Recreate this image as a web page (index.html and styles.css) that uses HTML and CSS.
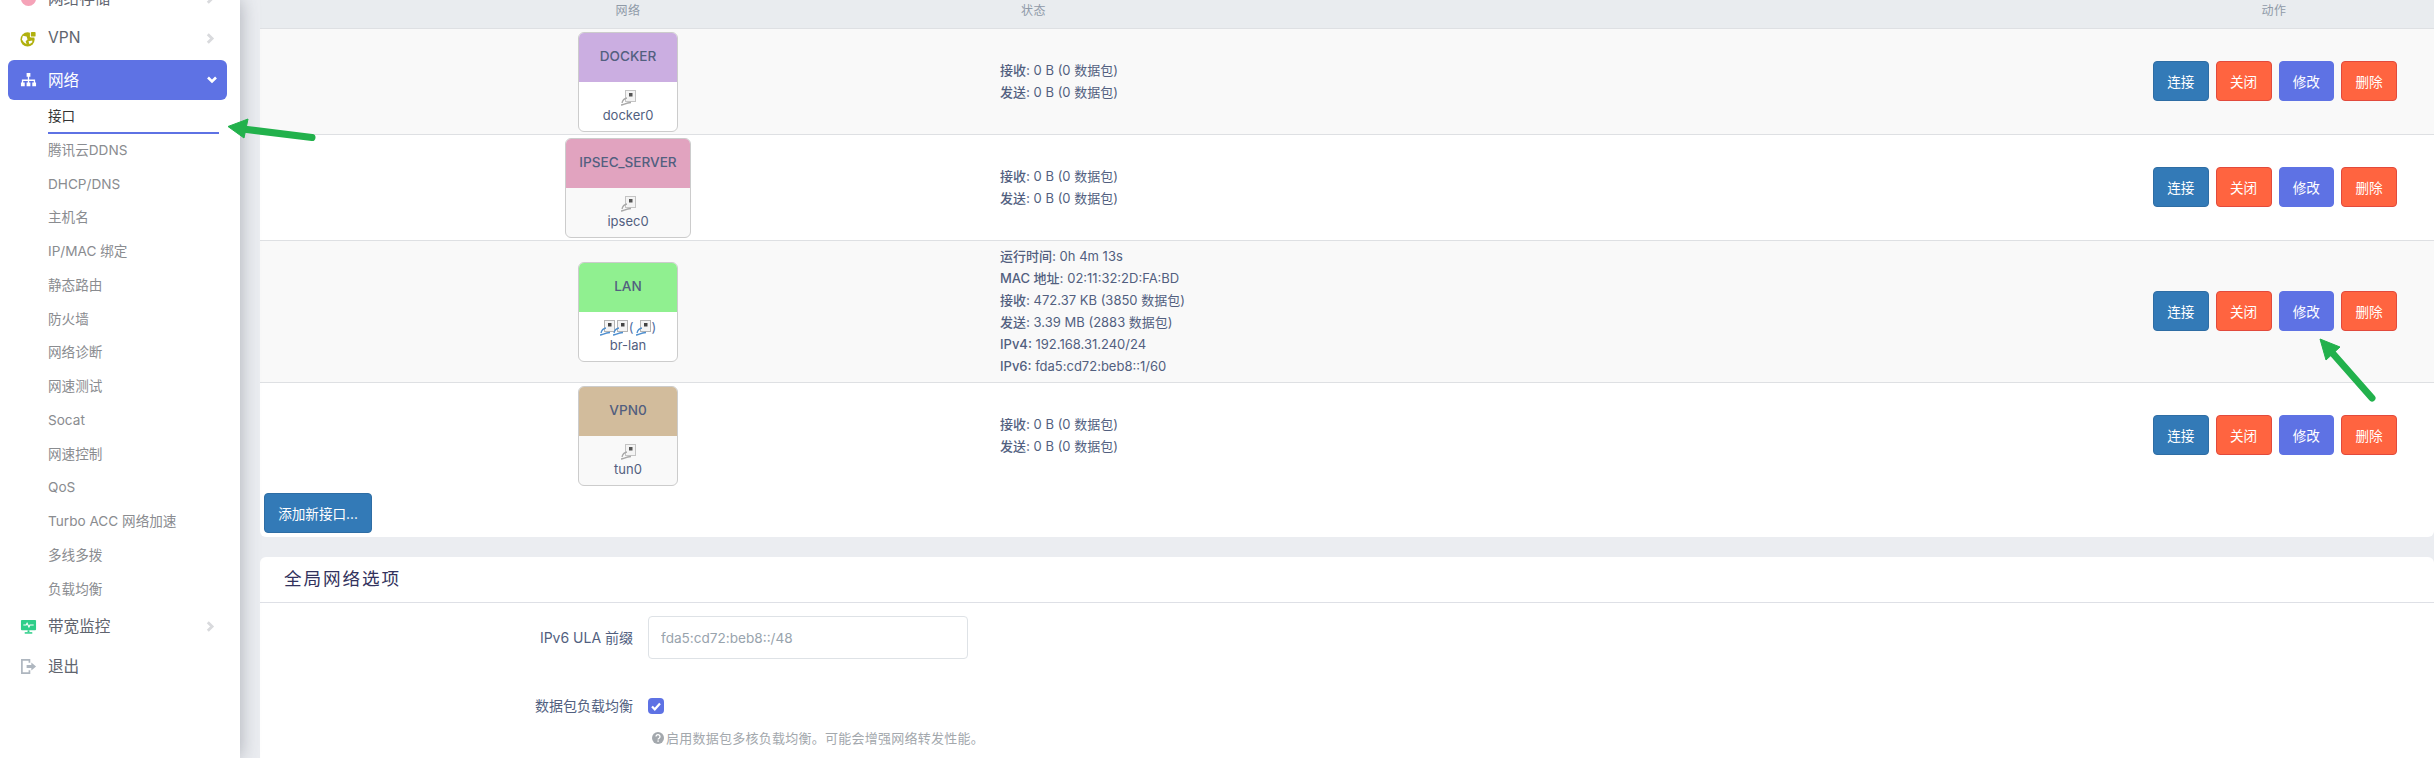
FILE: index.html
```html
<!DOCTYPE html>
<html lang="zh">
<head>
<meta charset="utf-8">
<title>接口</title>
<link rel="stylesheet" href="styles.css">
</head>
<body>
<aside class="sidebar">
  <nav class="nav">
    <a class="nav-item"><svg class="nav-icon" viewBox="0 0 18 18"><circle cx="9" cy="9" r="8" fill="#f5a3b8"/></svg><span>网络存储</span><svg class="chev" viewBox="0 0 10 12"><path d="M2.5 2l4 4-4 4" /></svg></a>
    <a class="nav-item"><svg class="nav-icon" viewBox="0 0 18 18"><circle cx="8" cy="10" r="7.5" fill="#b1b10e"/><path d="M3 6l4 1 1 3-2 2 1 3-3-2-2-3zM9 12l4-1 0 2-3 2z" fill="#fff"/><rect x="10.5" y="1" width="7" height="7" rx="1.5" fill="#fff"/><rect x="11.5" y="2" width="5" height="5" rx="1" fill="#b1b10e"/></svg><span>VPN</span><svg class="chev" viewBox="0 0 10 12"><path d="M2.5 2l4 4-4 4" /></svg></a>
    <a class="nav-item is-open"><svg class="nav-icon" viewBox="0 0 18 18"><path d="M7 1h4v4H7zM8.3 5h1.4v3H16v3h-1.4V9.4H9.7V11H8.3V9.4H3.4V11H2V8h6.3zM1 11h4v4H1zM7 11h4v4H7zM13 11h4v4h-4z" fill="#fff"/></svg><span>网络</span><svg class="chev chev-down" viewBox="0 0 12 10"><path d="M2 2.5l4 4 4-4" /></svg></a>
    <ul class="subnav">
      <li class="is-active">接口</li>
      <li>腾讯云DDNS</li>
      <li>DHCP/DNS</li>
      <li>主机名</li>
      <li>IP/MAC 绑定</li>
      <li>静态路由</li>
      <li>防火墙</li>
      <li>网络诊断</li>
      <li>网速测试</li>
      <li>Socat</li>
      <li>网速控制</li>
      <li>QoS</li>
      <li>Turbo ACC 网络加速</li>
      <li>多线多拨</li>
      <li>负载均衡</li>
    </ul>
    <a class="nav-item nav-after"><svg class="nav-icon" viewBox="0 0 18 18"><rect x="1" y="2" width="16" height="11" rx="1" fill="#2dce89"/><rect x="5" y="15" width="8" height="1.6" fill="#2dce89"/><rect x="8" y="13" width="2" height="2" fill="#2dce89"/><path d="M3.5 7.5h3l1-2 2 4 1-2h4" fill="none" stroke="#fff" stroke-width="1.1"/></svg><span>带宽监控</span><svg class="chev" viewBox="0 0 10 12"><path d="M2.5 2l4 4-4 4" /></svg></a>
    <a class="nav-item"><svg class="nav-icon" viewBox="0 0 18 18"><path d="M10 5V2H2v14h8v-3" fill="none" stroke="#aeb6bf" stroke-width="1.8"/><path d="M7 7.5h5V4.8L17 9l-5 4.2v-2.7H7z" fill="#aeb6bf"/></svg><span>退出</span></a>
  </nav>
</aside>

<main class="main">
  <section class="card card-table">
    <div class="row row-head">
      <div class="head-net">网络</div>
      <div class="head-status">状态</div>
      <div class="head-action">动作</div>
    </div>

    <div class="row row-odd">
      <div class="cell-net">
        <div class="iface">
          <div class="iface-name tint-docker">DOCKER</div>
          <div class="iface-body"><svg class="port" viewBox="0 0 16 16"><use href="#port-grey"/></svg><span>docker0</span></div>
        </div>
      </div>
      <div class="cell-status"><div><b>接收:</b> 0 B (0 数据包)</div><div><b>发送:</b> 0 B (0 数据包)</div></div>
      <div class="cell-action"><button class="btn btn-blue">连接</button><button class="btn btn-red">关闭</button><button class="btn btn-indigo">修改</button><button class="btn btn-red">删除</button></div>
    </div>

    <div class="row row-even">
      <div class="cell-net">
        <div class="iface iface-wide">
          <div class="iface-name tint-ipsec">IPSEC_SERVER</div>
          <div class="iface-body"><svg class="port" viewBox="0 0 16 16"><use href="#port-grey"/></svg><span>ipsec0</span></div>
        </div>
      </div>
      <div class="cell-status"><div><b>接收:</b> 0 B (0 数据包)</div><div><b>发送:</b> 0 B (0 数据包)</div></div>
      <div class="cell-action"><button class="btn btn-blue">连接</button><button class="btn btn-red">关闭</button><button class="btn btn-indigo">修改</button><button class="btn btn-red">删除</button></div>
    </div>

    <div class="row row-odd">
      <div class="cell-net">
        <div class="iface">
          <div class="iface-name tint-lan">LAN</div>
          <div class="iface-body"><div class="ports"><svg class="port" viewBox="0 0 16 16"><use href="#port-blue"/></svg><svg class="port port-tight" viewBox="0 0 16 16"><use href="#port-blue"/></svg><span class="paren">(</span><svg class="port" viewBox="0 0 16 16"><use href="#port-blue"/></svg><span class="paren">)</span></div><span>br-lan</span></div>
        </div>
      </div>
      <div class="cell-status"><div><b>运行时间:</b> 0h 4m 13s</div><div><b>MAC 地址:</b> 02:11:32:2D:FA:BD</div><div><b>接收:</b> 472.37 KB (3850 数据包)</div><div><b>发送:</b> 3.39 MB (2883 数据包)</div><div><b>IPv4:</b> 192.168.31.240/24</div><div><b>IPv6:</b> fda5:cd72:beb8::1/60</div></div>
      <div class="cell-action"><button class="btn btn-blue">连接</button><button class="btn btn-red">关闭</button><button class="btn btn-indigo">修改</button><button class="btn btn-red">删除</button></div>
    </div>

    <div class="row row-even row-last">
      <div class="cell-net">
        <div class="iface">
          <div class="iface-name tint-vpn">VPN0</div>
          <div class="iface-body"><svg class="port" viewBox="0 0 16 16"><use href="#port-grey"/></svg><span>tun0</span></div>
        </div>
      </div>
      <div class="cell-status"><div><b>接收:</b> 0 B (0 数据包)</div><div><b>发送:</b> 0 B (0 数据包)</div></div>
      <div class="cell-action"><button class="btn btn-blue">连接</button><button class="btn btn-red">关闭</button><button class="btn btn-indigo">修改</button><button class="btn btn-red">删除</button></div>
    </div>

    <div class="add-bar"><button class="btn btn-blue btn-add">添加新接口...</button></div>
  </section>

  <section class="card card-form">
    <h3 class="card-title">全局网络选项</h3>
    <div class="form-row form-row-input">
      <label class="form-label">IPv6 ULA 前缀</label>
      <input class="form-input" type="text" placeholder="fda5:cd72:beb8::/48">
    </div>
    <div class="form-row form-row-check">
      <label class="form-label">数据包负载均衡</label>
      <span class="check"><svg viewBox="0 0 16 16"><path d="M4 8.500l2.800 2.800L12 5.500" fill="none" stroke="#fff" stroke-width="2.2"/></svg></span>
    </div>
    <div class="form-row form-row-help">
      <span></span>
      <p class="help"><svg class="help-icon" viewBox="0 0 12 12"><circle cx="6" cy="6" r="6" fill="#a3a8ad"/><path d="M4 4.600a2 2 0 1 1 3.100 1.700c-.7.4-1 .7-1 1.300" fill="none" stroke="#fff" stroke-width="1.3"/><rect x="5.400" y="8.400" width="1.400" height="1.400" fill="#fff"/></svg>启用数据包多核负载均衡。可能会增强网络转发性能。</p>
    </div>
  </section>
</main>

<svg class="annotations" viewBox="0 0 2434 758">
  <g fill="#22b14c" stroke="#22b14c">
    <path d="M243 129L312 137.500" stroke-width="7" stroke-linecap="round" fill="none"/>
    <path d="M228 126.500L248 119L244 138Z" stroke-width="1"/>
    <path d="M2372 398L2328 348" stroke-width="7" stroke-linecap="round" fill="none"/>
    <path d="M2320 339L2340 347L2326 360Z" stroke-width="1"/>
  </g>
</svg>

<svg class="defs" width="0" height="0">
  <defs>
    <g id="port-grey">
      <rect x="5.500" y="0.500" width="10" height="11" fill="#f4f4f4" stroke="#c4c4c4"/>
      <rect x="9" y="3" width="3.500" height="3.500" fill="#555"/>
      <path d="M1 15c3 0 4-2 10-2.500M7 8C4 8.500 2.500 10.500 2 13" fill="none" stroke="#a8a8a8" stroke-width="1.300"/>
    </g>
    <g id="port-blue">
      <rect x="5.500" y="0.500" width="10" height="11" fill="#f4f4f4" stroke="#b4b4b4"/>
      <rect x="9" y="3" width="3.500" height="3.500" fill="#444"/>
      <path d="M1 15c3 0 4-2 10-2.500M7 8C4 8.500 2.500 10.500 2 13" fill="none" stroke="#4f8fcf" stroke-width="1.300"/>
    </g>
  </defs>
</svg>
</body>
</html>
```
FILE: styles.css
```css
* { box-sizing: border-box; }

html, body {
  margin: 0;
  height: 758px;
  overflow: hidden;
}

body {
  display: flex;
  background: #ebedf1;
  font-family: Inter, "Noto Sans CJK SC", sans-serif;
  font-size: 13.6px;
  color: #525f7f;
  text-spacing-trim: space-all;
}

.sidebar {
  flex: 0 0 240px;
  height: 758px;
  background: #fff;
  box-shadow: 0 0 18px rgba(60, 65, 80, 0.38);
  position: relative;
  z-index: 2;
  overflow: hidden;
}

.nav {
  margin-top: -22px;
  display: flex;
  flex-direction: column;
}

.nav-item {
  display: flex;
  align-items: center;
  height: 40px;
  margin: 0 13px 0 8px;
  padding: 0 11px 0 12px;
  border-radius: 6px;
  font-size: 15.6px;
  color: #60646e;
}

.nav-item span { flex: 1; margin-left: 11px; padding-bottom: 2px; }

.nav-icon { width: 17px; height: 17px; flex: none; }

.chev {
  width: 11px;
  height: 13px;
  fill: none;
  stroke: #d9dadd;
  stroke-width: 2.6;
}

.chev-down { stroke: #fff; width: 12px; height: 10px; margin-right: -2px; }

.is-open {
  margin-top: 2px;
  background: #5e72e4;
  color: #fff;
}

.subnav {
  list-style: none;
  margin: 0 0 0 48px;
  padding: 0;
  width: 171px;
  font-size: 13.6px;
  color: #8a8c90;
}

.subnav li {
  height: 33.75px;
  line-height: 32px;
}

.subnav .is-active {
  color: #333;
  border-bottom: 2px solid #5e72e4;
}

.main {
  flex: 1;
  min-width: 0;
  padding-left: 20px;
}

.card {
  background: #fff;
}

.card-table {
  height: 537px;
  border-radius: 0 0 6px 6px;
}

.row {
  display: grid;
  grid-template-columns: 736px 1fr 320px;
  align-items: center;
  border-bottom: 1px solid #dee0e3;
}

.row-head {
  height: 29px;
  padding-bottom: 9px;
  background: #e9ecef;
  font-size: 12px;
  letter-spacing: 0.5px;
  color: #8f9aa8;
}

.head-net { text-align: center; }
.head-status { padding-left: 25px; }
.head-action { text-align: center; }

.row-odd { background: #f9f9f9; }
.row-even { background: #fff; }
.row-last { border-bottom: 0; }

.row-odd:nth-child(2) { height: 106px; }
.row-even:nth-child(3) { height: 106px; }
.row-odd:nth-child(4) { height: 142px; }
.row-last { height: 106px; }

.cell-net { display: flex; justify-content: center; }

.iface {
  width: 100px;
  height: 100px;
  border: 1px solid #ccc;
  border-radius: 6px;
  overflow: hidden;
  display: flex;
  flex-direction: column;
  background: #fff;
  text-align: center;
}

.row-even .iface { background: #f9f9f9; }

.iface-wide { width: 126px; }

.iface-name {
  height: 49px;
  line-height: 47px;
  font-weight: 500;
  font-size: 13.6px;
  flex: none;
}

.tint-docker { background: #cbaee1; }
.tint-ipsec { background: #e1a3bf; }
.tint-lan { background: #90f090; }
.tint-vpn { background: #d2bc9c; }

.iface-body {
  flex: 1;
  display: flex;
  flex-direction: column;
  align-items: center;
  padding-top: 8px;
  font-size: 13px;
  line-height: 19px;
}

.port { width: 16px; height: 16px; display: block; flex: none; }
.port-tight { margin-left: -3px; }
.ports { display: flex; align-items: center; height: 16px; }
.paren { margin: 0 1px; font-size: 13px; color: #4f6fa5; }

.cell-status {
  padding: 0 0 2px 4px;
  line-height: 22px;
  font-size: 13px;
}

.cell-status b { font-weight: 500; }

.cell-action {
  display: flex;
  gap: 7px;
  justify-content: flex-end;
  padding: 0 37px 2px 0;
}

.btn {
  height: 40px;
  width: 55.75px;
  padding: 0;
  border: 1px solid transparent;
  border-radius: 4px;
  font: inherit;
  font-size: 13.6px;
  color: #fff;
}

.btn-blue { background: #337ab7; border-color: #2e6da4; }
.btn-red { background: #ff6440; border-color: #e24a3c; }
.btn-indigo { background: #5e72e4; border-color: #5e72e4; }

.add-bar {
  padding: 4px 0 0 4px;
}

.btn-add { width: 108px; height: 40px; }

.card-form {
  margin-top: 20px;
  height: 201px;
  border-radius: 6px 6px 0 0;
}

.card-title {
  margin: 0;
  height: 46px;
  padding: 0 0 0 24px;
  line-height: 44px;
  font-size: 17.6px;
  font-weight: 400;
  letter-spacing: 1.9px;
  color: #32325d;
  border-bottom: 1px solid #dee0e6;
}

.form-row {
  display: grid;
  grid-template-columns: 373px 1fr;
  column-gap: 15px;
  align-items: center;
}

.form-row-input { margin-top: 13px; }
.form-row-check { margin-top: 36px; height: 16px; }
.form-row-help { margin-top: 17px; }

.form-label {
  text-align: right;
  font-size: 14px;
  padding-bottom: 2px;
}

.form-input {
  width: 320px;
  height: 43px;
  padding: 0 12px;
  border: 1px solid #dee2e6;
  border-radius: 4px;
  font: inherit;
  font-size: 13.6px;
  color: #525f7f;
}

.form-input::placeholder { color: #98a3ad; opacity: 1; }

.check {
  display: block;
  width: 16px;
  height: 16px;
  border-radius: 4px;
  background: #5e72e4;
}

.check svg { display: block; width: 16px; height: 16px; }

.help {
  margin: 0;
  display: flex;
  align-items: center;
  gap: 2px;
  padding-left: 4px;
  font-size: 13px;
  letter-spacing: 0.25px;
  line-height: 20px;
  color: #a3a8ad;
}

.help-icon { width: 12px; height: 12px; flex: none; }

.annotations {
  position: absolute;
  left: 0;
  top: 0;
  width: 2434px;
  height: 758px;
  z-index: 3;
  pointer-events: none;
}

.defs { position: absolute; }
```
